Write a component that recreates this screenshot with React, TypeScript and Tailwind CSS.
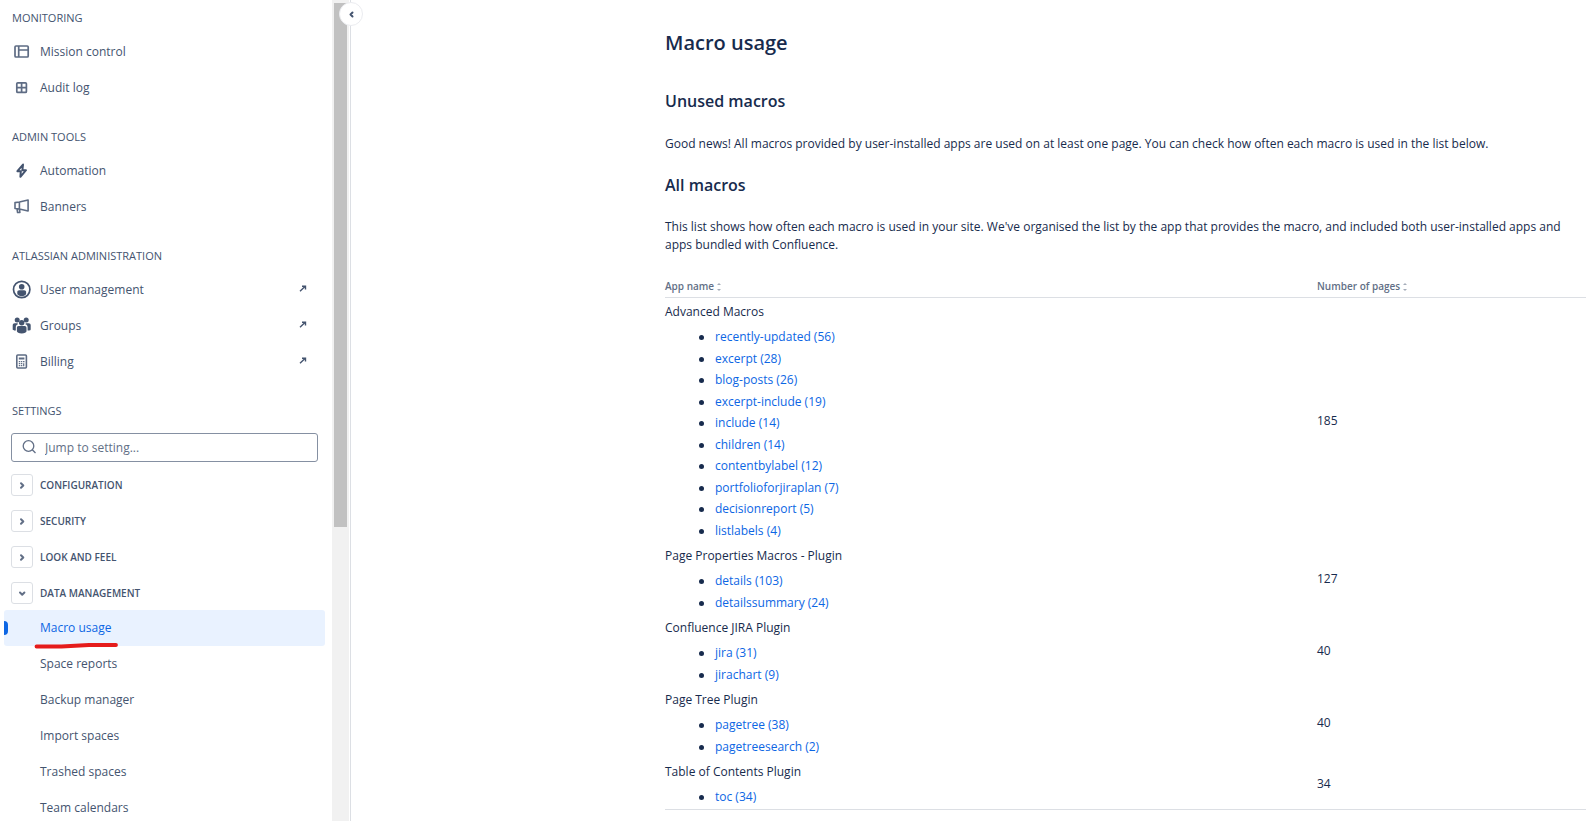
import { useState, type ReactNode } from 'react'

type NavItem = { label: string; icon: ReactNode; external?: boolean }

const NAV_SECTIONS: { title: string; items: NavItem[] }[] = [
    {
        title: 'MONITORING',
        items: [
            { label: 'Mission control', icon: <BoardIcon /> },
            { label: 'Audit log', icon: <GridIcon /> },
        ],
    },
    {
        title: 'ADMIN TOOLS',
        items: [
            { label: 'Automation', icon: <BoltIcon /> },
            { label: 'Banners', icon: <MegaphoneIcon /> },
        ],
    },
    {
        title: 'ATLASSIAN ADMINISTRATION',
        items: [
            { label: 'User management', icon: <UserIcon />, external: true },
            { label: 'Groups', icon: <PeopleIcon />, external: true },
            { label: 'Billing', icon: <CalculatorIcon />, external: true },
        ],
    },
]

const SETTING_GROUPS = [
    { label: 'CONFIGURATION', open: false },
    { label: 'SECURITY', open: false },
    { label: 'LOOK AND FEEL', open: false },
    { label: 'DATA MANAGEMENT', open: true },
]

const DATA_PAGES = ['Macro usage', 'Space reports', 'Backup manager', 'Import spaces', 'Trashed spaces', 'Team calendars']

const APPS: { name: string; pages: number; macros: [string, number][] }[] = [
    {
        name: 'Advanced Macros',
        pages: 185,
        macros: [
            ['recently-updated', 56],
            ['excerpt', 28],
            ['blog-posts', 26],
            ['excerpt-include', 19],
            ['include', 14],
            ['children', 14],
            ['contentbylabel', 12],
            ['portfolioforjiraplan', 7],
            ['decisionreport', 5],
            ['listlabels', 4],
        ],
    },
    {
        name: 'Page Properties Macros - Plugin',
        pages: 127,
        macros: [
            ['details', 103],
            ['detailssummary', 24],
        ],
    },
    {
        name: 'Confluence JIRA Plugin',
        pages: 40,
        macros: [
            ['jira', 31],
            ['jirachart', 9],
        ],
    },
    {
        name: 'Page Tree Plugin',
        pages: 40,
        macros: [
            ['pagetree', 38],
            ['pagetreesearch', 2],
        ],
    },
    { name: 'Table of Contents Plugin', pages: 34, macros: [['toc', 34]] },
]

function BoardIcon() {
    return (
        <svg width="20" height="20" viewBox="0 0 20 20" fill="none" stroke="#5e6c84" strokeWidth="1.7" aria-hidden="true">
            <rect x="3" y="4" width="13.2" height="11" rx="1" />
            <path d="M6.7 4v11M7 8h9" />
        </svg>
    )
}

function GridIcon() {
    return (
        <svg width="20" height="20" viewBox="0 0 20 20" fill="none" stroke="#5e6c84" strokeWidth="1.7" aria-hidden="true">
            <rect x="4.8" y="4.8" width="9.6" height="9.6" rx="1" />
            <path d="M9.6 5v9.5M5 9.6h9.5" />
        </svg>
    )
}

function BoltIcon() {
    return (
        <svg width="20" height="20" viewBox="0 0 20 20" fill="none" stroke="#44546f" strokeWidth="2" strokeLinejoin="round" aria-hidden="true">
            <path d="M11 3.6 5.4 10.2h3.4l-.4 5.600 5.600-6.600h-3.600z" />
        </svg>
    )
}

function MegaphoneIcon() {
    return (
        <svg width="20" height="20" viewBox="0 0 20 20" fill="none" stroke="#5e6c84" strokeWidth="1.6" strokeLinejoin="round" aria-hidden="true">
            <path d="M7.4 5.2v6.8M3 5.6l4.4-.6 8.7-2v11l-8.7-2-4.4-.5zM5 11.8l.6 3.7h2.3l-.5-3.4" />
        </svg>
    )
}

function UserIcon() {
    return (
        <svg width="20" height="20" viewBox="0 0 20 20" aria-hidden="true">
            <circle cx="9.7" cy="9.5" r="8.2" fill="none" stroke="#44546f" strokeWidth="1.7" />
            <circle cx="9.7" cy="6.7" r="2.8" fill="#44546f" />
            <path d="M5.3 12.1c0-1.2.8-1.9 1.900-1.900h5c1.100 0 1.900.7 1.900 1.900v2.200c-1.100 1.300-2.600 2-4.400 2s-3.300-.7-4.400-2z" fill="#44546f" />
        </svg>
    )
}

function PeopleIcon() {
    return (
        <svg width="20" height="20" viewBox="0 0 20 20" fill="#44546f" aria-hidden="true">
            <circle cx="5.2" cy="3.9" r="2.5" />
            <circle cx="14.2" cy="3.9" r="2.5" />
            <circle cx="9.7" cy="6.8" r="2.7" />
            <path d="M5.5 7.2H2.7c-1.2 0-2 .8-2 2v4c0 .8.6 1.2 1.4 1.2h1.7v-3.2c0-1.5.9-2.6 2.3-2.9zM13.9 7.2h2.8c1.2 0 2 .8 2 2v4c0 .8-.6 1.2-1.4 1.2h-1.7v-3.2c0-1.5-.9-2.6-2.3-2.9z" />
            <path d="M4.9 11.9c0-1.1.7-1.8 1.8-1.8h6c1.1 0 1.8.7 1.8 1.8v3.4c0 1.2-2 2.1-4.8 2.1s-4.8-.9-4.8-2.1z" />
        </svg>
    )
}

function CalculatorIcon() {
    return (
        <svg width="20" height="20" viewBox="0 0 20 20" fill="none" stroke="#5e6c84" strokeWidth="1.6" aria-hidden="true">
            <rect x="4.8" y="3" width="9.6" height="13" rx="1" />
            <path d="M6.8 6.5h5.6" strokeWidth="2" />
            <path d="M6.8 9.7h1.5M9 9.7h1.3M11 9.7h1.5M6.8 11.7h1.5M9 11.7h1.3M6.8 13.7h1.5M9 13.7h1.3M11.7 11.2v3" strokeWidth="1.2" />
        </svg>
    )
}

function ExternalIcon() {
    return (
        <svg className="mb-1" width="8" height="7" viewBox="0 0 8 7" fill="none" stroke="#44546f" strokeWidth="1.4" aria-hidden="true">
            <path d="M1 6.2 6 1.500M3 1.200h3.500v3.300" />
        </svg>
    )
}

function Chevron({ open = false, left = false }: { open?: boolean; left?: boolean }) {
    const d = left ? 'M6.5 3.5l-2 2 2 2' : open ? 'M3 4.500 5.200 6.700 7.400 4.500' : 'M4 3.200 6.300 5.500 4 7.800'
    return (
        <svg
            width="11"
            height="11"
            viewBox="0 0 11 11"
            fill="none"
            stroke={left ? '#44546f' : '#626f86'}
            strokeWidth="2"
            strokeLinecap="round"
            strokeLinejoin="round"
            aria-hidden="true"
        >
            <path d={d} />
        </svg>
    )
}

function SortIcon() {
    return (
        <svg className="mt-0.5" width="4" height="8" viewBox="0 0 4 8" fill="#a5adba" aria-hidden="true">
            <path d="M2 0 4 2H0zM2 8 0 6h4z" />
        </svg>
    )
}

function SectionHeading({ children }: { children: ReactNode }) {
    return <h2 className="flex h-6 items-center pl-3 pt-3 text-[11px] leading-4">{children}</h2>
}

function Sidebar() {
    return (
        <nav aria-label="Administration" className="w-[332px] shrink-0 overflow-hidden text-[12px] text-[#44546f]">
            {NAV_SECTIONS.map((section) => (
                <section key={section.title} className="mb-[13px]">
                    <SectionHeading>{section.title}</SectionHeading>
                    <ul className="pt-2.5">
                        {section.items.map((item) => (
                            <li key={item.label}>
                                <a href="#" className="flex h-9 items-center pl-3 pr-[25px]">
                                    {item.icon}
                                    <span className="ml-2 flex-1">{item.label}</span>
                                    {item.external && <ExternalIcon />}
                                </a>
                            </li>
                        ))}
                    </ul>
                </section>
            ))}

            <section>
                <SectionHeading>SETTINGS</SectionHeading>
                <label className="ml-[11px] mr-3.5 mt-4 flex h-[29px] items-center rounded-[3px] border border-[#8590a2] pl-2.5">
                    <svg width="15" height="15" viewBox="0 0 15 15" fill="none" stroke="#626f86" strokeWidth="1.3" aria-hidden="true">
                        <circle cx="6.5" cy="6" r="5.3" />
                        <path d="m10.3 9.8 3.2 3.2" />
                    </svg>
                    <input
                        type="text"
                        aria-label="Jump to setting"
                        placeholder="Jump to setting..."
                        className="ml-2 min-w-0 flex-1 outline-none placeholder:text-[#626f86]"
                    />
                </label>
                <div className="pt-[5px]">
                    {SETTING_GROUPS.map((group) => (
                        <button
                            key={group.label}
                            type="button"
                            aria-expanded={group.open}
                            className="flex h-9 w-full items-center gap-[7px] pl-[11px] text-left text-[10px] font-semibold"
                        >
                            <span className="flex size-[22px] items-center justify-center rounded-[3px] border border-[#dcdfe4]">
                                <Chevron open={group.open} />
                            </span>
                            {group.label}
                        </button>
                    ))}
                </div>
                <ul className="-mt-px">
                    {DATA_PAGES.map((page, i) => (
                        <li key={page}>
                            {i === 0 ? (
                                <a
                                    href="#"
                                    aria-current="page"
                                    className="relative ml-1 mr-[7px] flex h-9 items-center rounded-[3px] bg-[#e9f2ff] text-[#0c66e4]"
                                >
                                    <span className="h-3.5 w-1 rounded-r-sm bg-[#0c66e4]" />
                                    <span className="ml-8">{page}</span>
                                    <svg className="absolute -bottom-[3px] left-[30px]" width="85" height="7" viewBox="0 0 85 7" fill="none" aria-hidden="true">
                                        <path d="M2.5 4.5h25L55 3h27" stroke="#e51c1c" strokeWidth="3.8" strokeLinecap="round" strokeLinejoin="round" />
                                    </svg>
                                </a>
                            ) : (
                                <a href="#" className="flex h-9 items-center pl-10">
                                    {page}
                                </a>
                            )}
                        </li>
                    ))}
                </ul>
            </section>
        </nav>
    )
}

function MacroTable() {
    return (
        <table className="mt-6 w-full border-b border-[#dcdfe4] text-left">
            <thead>
                <tr className="border-b border-[#dcdfe4] text-[10px] leading-4 text-[#626f86]">
                    {['App name', 'Number of pages'].map((heading) => (
                        <th key={heading} scope="col" className="pb-[3px] font-semibold last:w-[269px]">
                            <button type="button" className="flex items-center gap-[3px]">
                                {heading}
                                <SortIcon />
                            </button>
                        </th>
                    ))}
                </tr>
            </thead>
            <tbody>
                {APPS.map((app) => (
                    <tr key={app.name} className="group">
                        <td className="pb-[3px] pt-1 group-first:pt-[5px]">
                            {app.name}
                            <ul className="mt-[7px] pl-[34px]">
                                {app.macros.map(([macro, count]) => (
                                    <li
                                        key={macro}
                                        className="mt-[3px] flex items-center gap-[11px] before:size-[5px] before:rounded-full before:bg-[#172b4d] first:mt-0 even:mt-1"
                                    >
                                        <a href="#" className="text-[#0c66e4]">
                                            {macro} ({count})
                                        </a>
                                    </li>
                                ))}
                            </ul>
                        </td>
                        <td className="align-middle">{app.pages}</td>
                    </tr>
                ))}
            </tbody>
        </table>
    )
}

export default function App() {
    const [collapsed, setCollapsed] = useState(false)

    return (
        <div className="flex h-screen overflow-hidden bg-white font-['Open_Sans','Noto_Sans',sans-serif]">
            {!collapsed && <Sidebar />}
            <div className="w-[17px] shrink-0 bg-[#f1f1f1] px-0.5 pt-[3px]">
                <div className="h-[64%] bg-[#c1c1c1]" />
            </div>
            <div className="relative ml-px w-px shrink-0 bg-[#dcdfe4]">
                <button
                    type="button"
                    aria-label="Toggle sidebar"
                    onClick={() => setCollapsed(!collapsed)}
                    className="absolute -left-[11px] top-0.5 flex size-6 items-center justify-center rounded-full border border-[#ebecf0] bg-white"
                >
                    <Chevron left />
                </button>
            </div>
            <main className="min-w-0 flex-1 pl-[314px] pr-2 text-[12px] leading-[18px] text-[#172b4d]">
                <h1 className="mt-[27px] text-[20px] font-semibold leading-8">Macro usage</h1>
                <h2 className="mt-[30px] text-[16px] font-semibold leading-6">Unused macros</h2>
                <p className="mt-[22px]">
                    Good news! All macros provided by user-installed apps are used on at least one page. You can check how often each
                    macro is used in the list below.
                </p>
                <h2 className="mt-5 text-[16px] font-semibold leading-6">All macros</h2>
                <p className="mt-[21px]">
                    This list shows how often each macro is used in your site. We've organised the list by the app that provides the
                    macro, and included both user-installed apps and apps bundled with Confluence.
                </p>
                <MacroTable />
            </main>
        </div>
    )
}
